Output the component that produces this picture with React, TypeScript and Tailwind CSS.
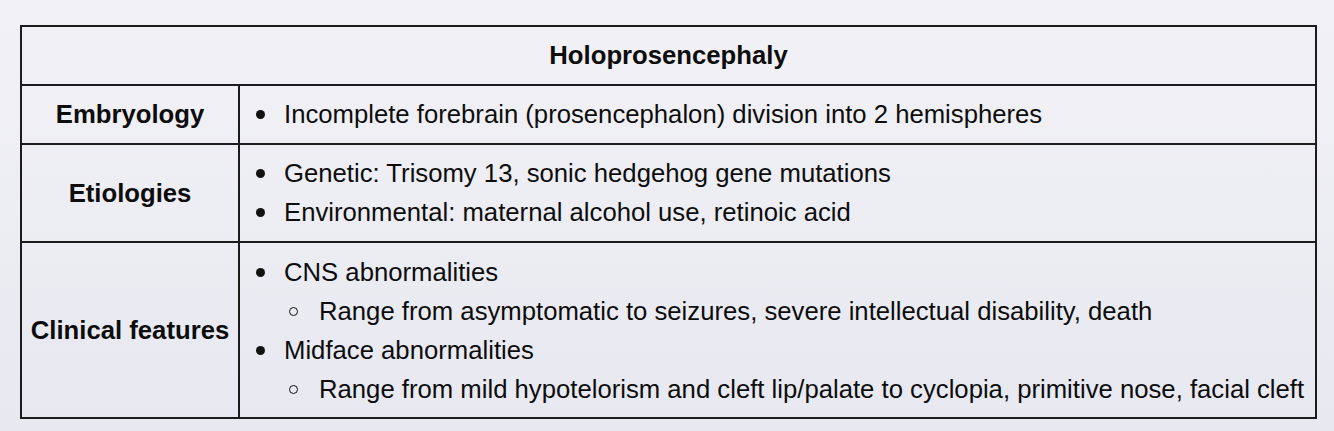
import React from "react";

type Item = { text: string; sub?: string[] };

const Bullet = ({ text }: { text: string }) => (
  <div className="flex items-center pl-[16px]">
    <span className="inline-block w-[9px] h-[9px] rounded-full bg-[#111] shrink-0" />
    <span className="ml-[19px]">{text}</span>
  </div>
);

const SubBullet = ({ text }: { text: string }) => (
  <div className="flex items-center pl-[49px]">
    <span className="inline-block w-[9px] h-[9px] rounded-full border-[1.5px] border-[#111] shrink-0" />
    <span className="ml-[21px]">{text}</span>
  </div>
);

const Row = ({ label, items, pad }: { label: string; items: Item[]; pad: string }) => (
  <div className="flex border-t-2 border-[#1c1c1c]">
    <div className="w-[218px] shrink-0 border-r-2 border-[#1c1c1c] flex items-center justify-center font-bold text-center">
      {label}
    </div>
    <div className={`flex-1 ${pad}`}>
      {items.map((it, i) => (
        <React.Fragment key={i}>
          <Bullet text={it.text} />
          {it.sub?.map((s, j) => (
            <SubBullet key={j} text={s} />
          ))}
        </React.Fragment>
      ))}
    </div>
  </div>
);

export default function App() {
  return (
    <div
      className="w-[1334px] h-[431px] bg-gradient-to-b from-[#f2f2f6] to-[#e7e8f0] pt-[25px] pl-[20px] text-[#0d0d0d] text-[25.7px] leading-[39px]"
      style={{ fontFamily: '"Liberation Sans", Arial, Helvetica, sans-serif' }}
    >
      <div className="w-[1297px] border-2 border-[#1c1c1c]">
        <div className="py-[9px] text-center font-bold">Holoprosencephaly</div>
        <Row
          label="Embryology"
          pad="py-[9px]"
          items={[{ text: "Incomplete forebrain (prosencephalon) division into 2 hemispheres" }]}
        />
        <Row
          label="Etiologies"
          pad="py-[9px]"
          items={[
            { text: "Genetic: Trisomy 13, sonic hedgehog gene mutations" },
            { text: "Environmental: maternal alcohol use, retinoic acid" },
          ]}
        />
        <Row
          label="Clinical features"
          pad="pt-[10px] pb-[8px]"
          items={[
            {
              text: "CNS abnormalities",
              sub: ["Range from asymptomatic to seizures, severe intellectual disability, death"],
            },
            {
              text: "Midface abnormalities",
              sub: [
                "Range from mild hypotelorism and cleft lip/palate to cyclopia, primitive nose, facial cleft",
              ],
            },
          ]}
        />
      </div>
    </div>
  );
}
